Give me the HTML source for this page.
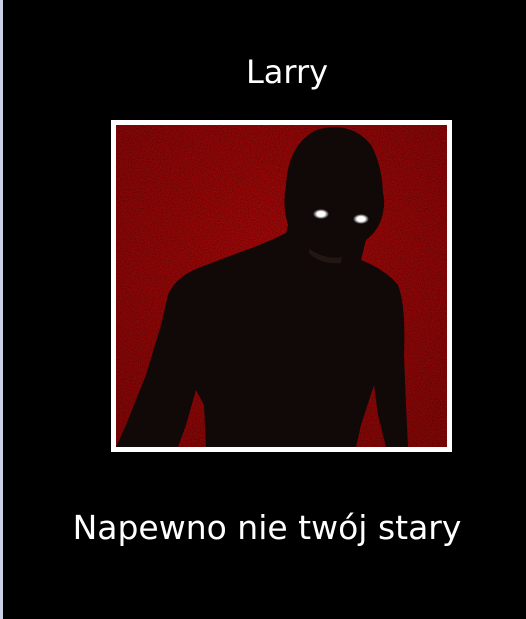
<!DOCTYPE html>
<html><head><meta charset="utf-8"><style>
html,body{margin:0;padding:0;width:526px;height:619px;overflow:hidden;background:#000;}
body{position:relative;font-family:"DejaVu Sans","Liberation Sans",sans-serif;color:#fff;}
.strip{position:absolute;left:0;top:0;width:3px;height:619px;background:#c9d1e2;}
.title{position:absolute;left:0;width:526px;text-align:center;top:53px;font-size:32px;padding-left:48px;box-sizing:border-box;}
.frame{position:absolute;left:111px;top:120px;width:331px;height:322px;border:5px solid #fff;overflow:hidden;background:#8a0404;}
.cap{position:absolute;left:0;width:526px;text-align:center;top:508px;font-size:33px;padding-left:8px;box-sizing:border-box;}
</style></head><body>
<div class="strip"></div>
<div class="title">Larry</div>
<div class="frame">
<svg width="331" height="322" viewBox="0 0 331 322" style="position:absolute;left:0;top:0">
<defs>
<filter id="n" x="0" y="0" width="100%" height="100%">
<feTurbulence type="fractalNoise" baseFrequency="0.9" numOctaves="2" seed="3"/>
<feColorMatrix type="matrix" values="0 0 0 0 0  0 0 0 0 0  0 0 0 0 0  0 0 0 -1.6 1.1"/>
</filter>
<radialGradient id="v" cx="50%" cy="40%" r="70%">
<stop offset="0" stop-color="#000" stop-opacity="0"/>
<stop offset="1" stop-color="#000" stop-opacity="0.2"/>
</radialGradient>
<radialGradient id="e"><stop offset="0" stop-color="#fff"/><stop offset="0.5" stop-color="#fff"/><stop offset="1" stop-color="#fff" stop-opacity="0"/></radialGradient>
</defs>
<rect width="331" height="322" fill="#a80808"/>
<rect width="331" height="322" filter="url(#n)" opacity="0.45"/>
<rect width="331" height="322" fill="url(#v)"/>
<path fill="#110908" d="M0 322 L10 300 L30 250 L45 200 L52 170 Q60 150 90 140 L130 125 Q150 118 170 108 L172 100 Q166 80 170 60 Q172 20 200 5 Q235 -5 255 20 Q266 40 267 68 Q270 80 265 95 Q260 108 250 115 L245 135 Q270 145 282 160 Q290 180 288 230 L290 280 L292 322 L270 322 L262 290 L258 260 L245 300 L240 322 L90 322 L88 280 L80 265 L70 300 L62 322 Z"/>
<path fill="#3a2a22" opacity="0.4" d="M193 128 Q205 140 225 138 L226 132 Q210 135 193 124Z"/>
<ellipse cx="205" cy="89" rx="8" ry="5" fill="url(#e)"/>
<ellipse cx="245" cy="94" rx="8" ry="5" fill="url(#e)"/>
</svg>
</div>
<div class="cap">Napewno nie twój stary</div>
</body></html>
